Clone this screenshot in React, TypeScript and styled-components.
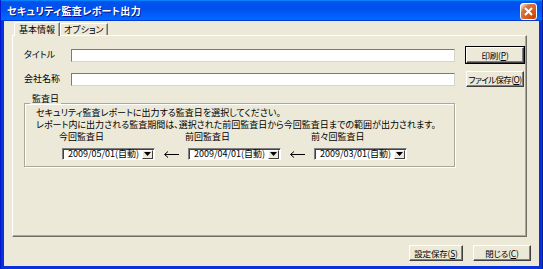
import React from "react";
import styled, { createGlobalStyle } from "styled-components";

const GlobalStyle = createGlobalStyle`
  html, body {
    margin: 0;
    padding: 0;
    background: #ffffff;
  }
  body {
    font-family: "Noto Sans CJK JP", "DejaVu Sans", sans-serif;
    font-size: 9px;
    font-feature-settings: "palt";
    color: #000;
  }
`;

interface DateSelect {
  label: string;
  value: string;
}

const dates: DateSelect[] = [
  { label: "今回監査日", value: "2009/05/01(自動)" },
  { label: "前回監査日", value: "2009/04/01(自動)" },
  { label: "前々回監査日", value: "2009/03/01(自動)" },
];

export default function App() {
  return (
    <>
      <GlobalStyle />
      <Window>
        <TitleBar>
          <TitleText>セキュリティ監査レポート出力</TitleText>
          <CloseButton>
            <svg width="9" height="9" viewBox="0 0 9 9">
              <path d="M1 1 L8 8 M8 1 L1 8" stroke="#fff" strokeWidth="2" />
            </svg>
          </CloseButton>
        </TitleBar>
        <Client>
          <Tabs>
            <Tab $active>基本情報</Tab>
            <Tab>オプション</Tab>
          </Tabs>
          <Panel>
            <FormGrid>
              <Label>タイトル</Label>
              <TextBox />
              <Button $default>印刷(<u>P</u>)</Button>
              <Label>会社名称</Label>
              <TextBox />
              <Button $tight>ファイル保存(<u>O</u>)</Button>
            </FormGrid>
            <Group>
              <Legend>監査日</Legend>
              <Note>セキュリティ監査レポートに出力する監査日を選択してください。</Note>
              <Note>
                レポート内に出力される監査期間は、選択された前回監査日から今回監査日までの範囲が出力されます。
              </Note>
              <DateRow>
                {dates.map((d, i) => (
                  <React.Fragment key={d.label}>
                    {i > 0 && (
                      <ArrowCell>
                        <svg width="15" height="7" viewBox="0 0 15 7">
                          <path d="M1 3.5 H15" stroke="#000" strokeWidth="1" />
                          <path d="M4 0.5 L0.5 3.5 L4 6.5" stroke="#000" fill="none" strokeWidth="1" />
                        </svg>
                      </ArrowCell>
                    )}
                    <DateCell>
                      <DateLabel>{d.label}</DateLabel>
                      <Combo>
                        <ComboText>{d.value}</ComboText>
                        <ComboButton>
                          <svg width="7" height="4" viewBox="0 0 7 4">
                            <path d="M0 0 H7 L3.5 4 Z" fill="#000" />
                          </svg>
                        </ComboButton>
                      </Combo>
                    </DateCell>
                  </React.Fragment>
                ))}
              </DateRow>
            </Group>
          </Panel>
          <Footer>
            <Button>設定保存(<u>S</u>)</Button>
            <Button>閉じる(<u>C</u>)</Button>
          </Footer>
        </Client>
      </Window>
    </>
  );
}

const Window = styled.div`
  width: 543px;
  height: 269px;
  box-sizing: border-box;
  background: #0831d9;
  border-left: 1px solid #0019cf;
  border-right: 1px solid #001ea0;
  display: flex;
  flex-direction: column;
  padding: 0 3px 3px 3px;
`;

const TitleBar = styled.div`
  height: 21px;
  margin: 0 -3px;
  display: flex;
  align-items: center;
  justify-content: space-between;
  padding: 0 5px 0 6px;
  background: linear-gradient(
    180deg,
    #0997ff,
    #0053ee 8%,
    #0050ee 40%,
    #0066ff 88%,
    #0066ff 93%,
    #005bff 95%,
    #003dd7 96%,
    #003dd7
  );
`;

const TitleText = styled.span`
  color: #fff;
  font-weight: bold;
  font-size: 10px;
  letter-spacing: 0.3px;
  text-shadow: 1px 1px 0 #0f1089;
`;

const CloseButton = styled.div`
  width: 15px;
  height: 15px;
  margin-top: 1px;
  border: 1px solid #fff;
  border-radius: 3px;
  background: radial-gradient(circle at 90% 90%, #cc4600 0, #dc6527 55%, #cd7546 70%, #ffccb2 90%, #fff 100%);
  box-sizing: content-box;
  display: flex;
  align-items: center;
  justify-content: center;
`;

const Client = styled.div`
  flex: 1;
  background: #ece9d8;
  padding: 1px 12px 0 8px;
  display: flex;
  flex-direction: column;
`;

const Tabs = styled.div`
  display: flex;
  align-items: flex-end;
  height: 13px;
  padding-left: 2px;
`;

const Tab = styled.div<{ $active?: boolean }>`
  height: ${(p) => (p.$active ? "13px" : "11px")};
  padding: ${(p) => (p.$active ? "0 4px" : "0 3px")};
  background: #ece9d8;
  border-top: 1px solid #fff;
  border-left: 1px solid #fff;
  border-right: 1px solid #716f64;
  box-shadow: inset -1px 0 0 #aca899;
  line-height: ${(p) => (p.$active ? "13px" : "11px")};
  position: relative;
  z-index: ${(p) => (p.$active ? 1 : 0)};
  margin-bottom: ${(p) => (p.$active ? "-1px" : "0")};
`;

const Panel = styled.div`
  height: 202px;
  box-sizing: border-box;
  border-top: 1px solid #fff;
  border-left: 1px solid #fff;
  border-right: 1px solid #716f64;
  border-bottom: 1px solid #716f64;
  box-shadow: inset -1px -1px 0 #aca899;
  padding: 11px 4px 0 11px;
`;

const FormGrid = styled.div`
  display: grid;
  grid-template-columns: 36px 384px 58px;
  column-gap: 11px;
  row-gap: 8px;
  align-items: center;
`;

const Label = styled.div`
  line-height: 12px;
  white-space: nowrap;
`;

const TextBox = styled.div`
  height: 13px;
  box-sizing: border-box;
  background: #fff;
  border-top: 1px solid #7a7a7a;
  border-left: 1px solid #7a7a7a;
  border-right: 1px solid #d8d5c6;
  border-bottom: 1px solid #d8d5c6;
`;

const Button = styled.div<{ $default?: boolean; $tight?: boolean }>`
  height: 16px;
  box-sizing: border-box;
  background: #ece9d8;
  border-top: 1px solid #fff;
  border-left: 1px solid #fff;
  border-right: 1px solid #404040;
  border-bottom: 1px solid #404040;
  box-shadow: inset -1px -1px 0 #808080;
  outline: ${(p) => (p.$default ? "1px solid #000" : "none")};
  display: flex;
  align-items: center;
  justify-content: center;
  white-space: nowrap;
  font-size: 8.5px;
  letter-spacing: ${(p) => (p.$tight ? "-0.6px" : "-0.2px")};
  padding: 0;
`;

const Group = styled.div`
  position: relative;
  margin: 16px 0 0 0;
  width: 431px;
  height: 64px;
  box-sizing: border-box;
  border: 1px solid #aca899;
  box-shadow: 1px 1px 0 #fff, inset 1px 1px 0 #fff;
  padding: 3px 0 0 11px;
`;

const Legend = styled.div`
  position: absolute;
  top: -10px;
  left: 5px;
  padding: 0 2px;
  line-height: 10px;
  background: #ece9d8;
`;

const Note = styled.div`
  line-height: 12px;
  white-space: nowrap;
`;

const DateRow = styled.div`
  display: flex;
  align-items: flex-end;
  margin-top: 0;
  padding-left: 26px;
`;

const DateCell = styled.div`
  display: flex;
  flex-direction: column;
  width: 93px;
`;

const DateLabel = styled.div`
  line-height: 12px;
  margin-left: -3px;
  margin-bottom: 5px;
  white-space: nowrap;
`;

const ArrowCell = styled.div`
  width: 33px;
  height: 12px;
  display: flex;
  align-items: center;
  justify-content: center;
`;

const Combo = styled.div`
  height: 12px;
  box-sizing: border-box;
  background: #fff;
  border-top: 1px solid #808080;
  border-left: 1px solid #808080;
  border-right: 1px solid #fff;
  border-bottom: 1px solid #fff;
  box-shadow: inset 1px 1px 0 #404040;
  display: flex;
  align-items: center;
`;

const ComboText = styled.div`
  flex: 1;
  padding-left: 5px;
  font-size: 9px;
  line-height: 10px;
`;

const ComboButton = styled.div`
  width: 11px;
  height: 9px;
  margin-right: 1px;
  box-sizing: border-box;
  background: #ece9d8;
  border-top: 1px solid #fff;
  border-left: 1px solid #fff;
  border-right: 1px solid #404040;
  border-bottom: 1px solid #404040;
  display: flex;
  align-items: center;
  justify-content: center;
`;

const Footer = styled.div`
  display: flex;
  justify-content: flex-end;
  gap: 10px;
  margin-top: 8px;
  margin-right: -4px;

  & > div:first-child {
    width: 54px;
  }
  & > div:last-child {
    width: 58px;
  }
`;
